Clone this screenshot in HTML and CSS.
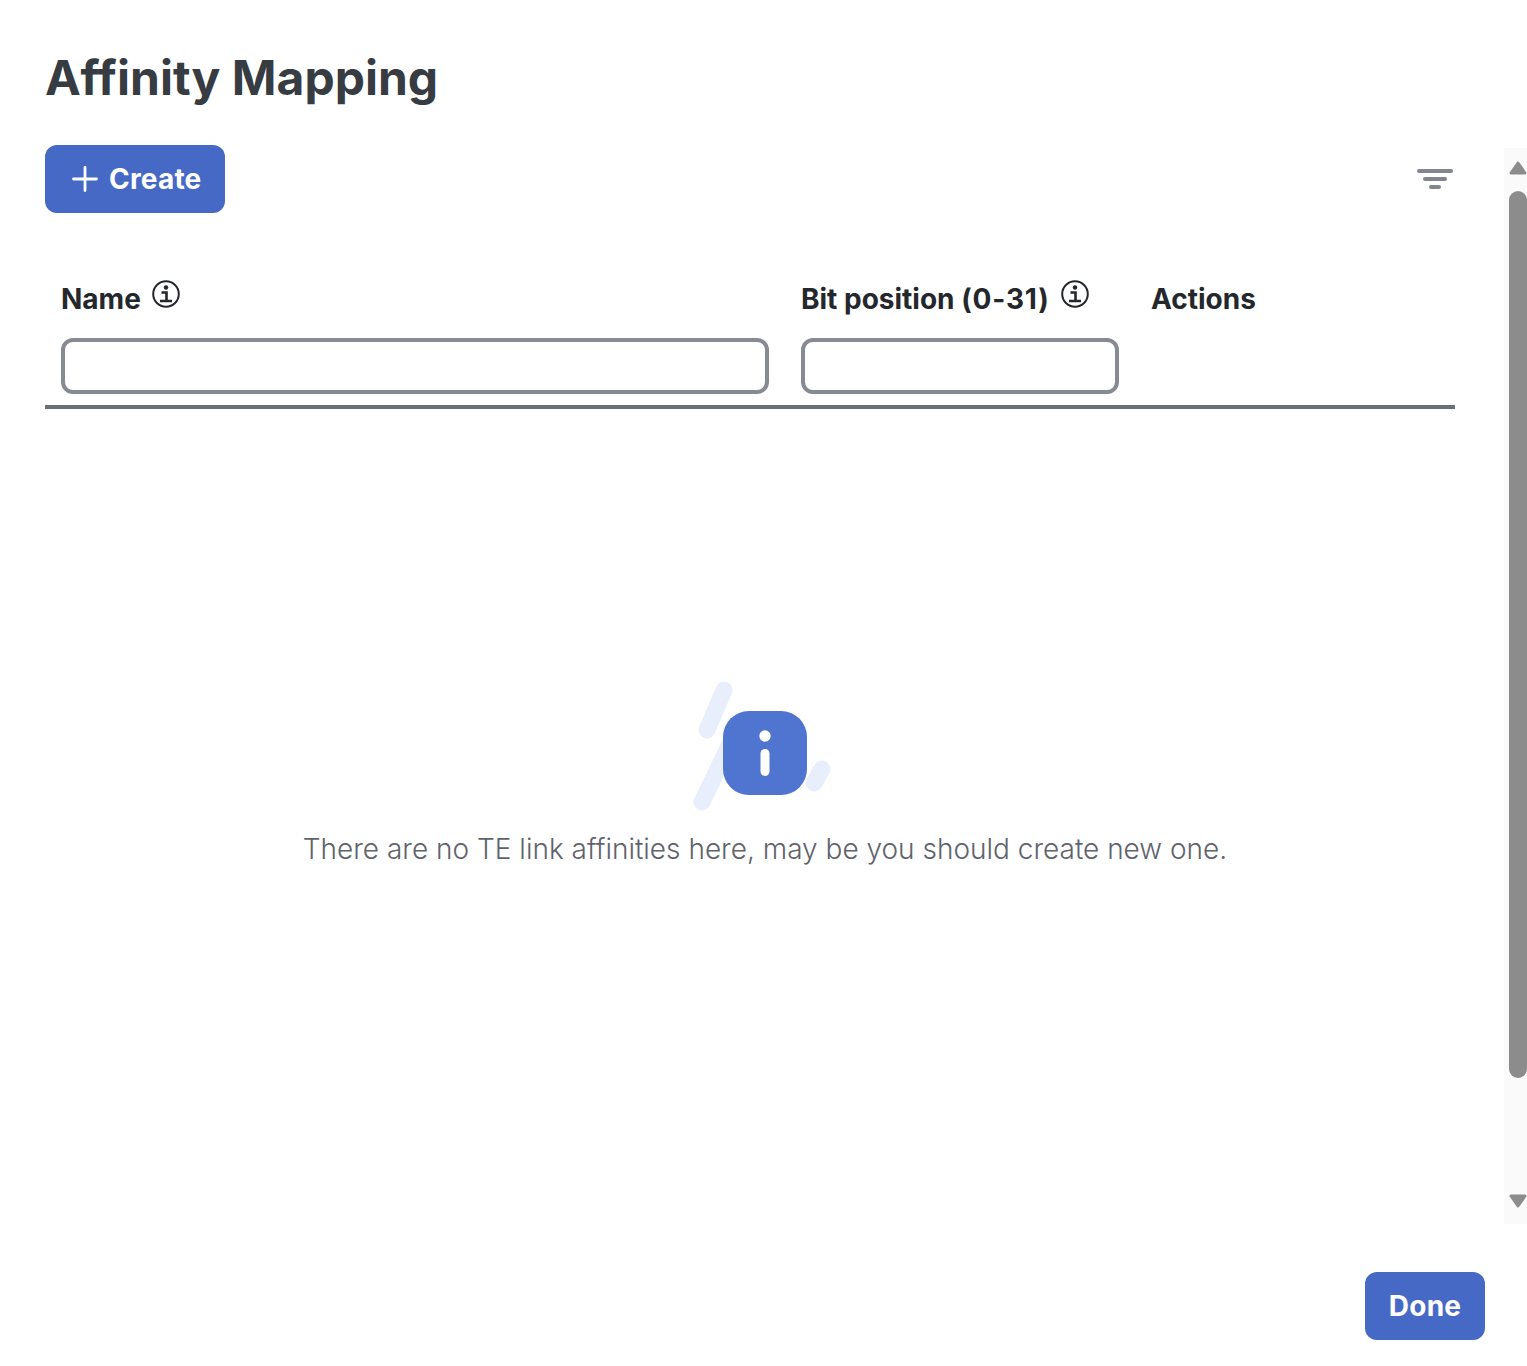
FILE: index.html
```html
<!DOCTYPE html>
<html lang="en">
<head>
    <meta charset="UTF-8">
    <title>Affinity Mapping</title>
    <link rel="stylesheet" href="styles.css">
</head>
<body>
    <div class="dialog">
        <h1 class="title">Affinity Mapping</h1>

        <div class="content">
            <div class="main">
                <div class="toolbar">
                    <button class="btn btn-create" type="button">
                        <svg class="plus-icon" viewBox="0 0 26 26" width="26" height="26">
                            <path d="M13 1.5v23M1.5 13h23" fill="none" stroke="#fff" stroke-width="2.8" stroke-linecap="round"/>
                        </svg>
                        Create
                    </button>
                    <svg class="filter-icon" viewBox="0 0 36 22" width="36" height="22">
                        <path d="M2 3h32M8 11h20M14 19h8" fill="none" stroke="#82868e" stroke-width="4" stroke-linecap="round"/>
                    </svg>
                </div>

                <div class="table-head">
                    <div class="cell">
                        <div class="label">
                            Name
                            <svg class="info-icon" viewBox="0 0 28 28" width="28" height="28">
                                <circle cx="14" cy="14" r="12.8" fill="none" stroke="#24272c" stroke-width="2"/>
                                <circle cx="14" cy="7.5" r="2.2" fill="#24272c"/>
                                <path d="M9.500 12.500h5v9M8 21h12" fill="none" stroke="#24272c" stroke-width="2.600"/>
                            </svg>
                        </div>
                        <input class="filter-input" type="text">
                    </div>
                    <div class="cell">
                        <div class="label">
                            <span>Bit position <span class="range">(0-31)</span></span>
                            <svg class="info-icon" viewBox="0 0 28 28" width="28" height="28">
                                <circle cx="14" cy="14" r="12.8" fill="none" stroke="#24272c" stroke-width="2"/>
                                <circle cx="14" cy="7.5" r="2.2" fill="#24272c"/>
                                <path d="M9.500 12.500h5v9M8 21h12" fill="none" stroke="#24272c" stroke-width="2.600"/>
                            </svg>
                        </div>
                        <input class="filter-input" type="text">
                    </div>
                    <div class="cell">
                        <div class="label">Actions</div>
                    </div>
                </div>

                <div class="empty">
                    <svg class="empty-icon" viewBox="0 0 144 132" width="144" height="132">
                        <path d="M35 9 18 49M41 63 13 121M133 88l-8 14" fill="none" stroke="#e8eefb" stroke-width="17" stroke-linecap="round"/>
                        <rect x="34" y="30" width="84" height="84" rx="26" fill="#4f75d1"/>
                        <circle cx="76" cy="55" r="5.700" fill="#fff"/>
                        <rect x="71.500" y="68" width="9" height="27" rx="4.500" fill="#fff"/>
                    </svg>
                    <p class="empty-text">There are no TE link affinities here, may be you should create new one.</p>
                </div>
            </div>

            <div class="scrollbar">
                <svg class="arrow arrow-up" viewBox="0 0 18 14" width="18" height="14">
                    <path d="M9 2 2 12h14z" fill="#8c8c8c" stroke="#8c8c8c" stroke-width="3" stroke-linejoin="round"/>
                </svg>
                <div class="thumb"></div>
                <svg class="arrow arrow-down" viewBox="0 0 18 14" width="18" height="14">
                    <path d="M2 2h14L9 12z" fill="#8c8c8c" stroke="#8c8c8c" stroke-width="3" stroke-linejoin="round"/>
                </svg>
            </div>
        </div>

        <div class="footer">
            <button class="btn btn-done" type="button">Done</button>
        </div>
    </div>
</body>
</html>
```

FILE: styles.css
```css
* {
    box-sizing: border-box;
}

body {
    margin: 0;
    background: #fff;
    font-family: Inter, "Liberation Sans", sans-serif;
    color: #24272c;
}

.dialog {
    height: 1366px;
    display: flex;
    flex-direction: column;
    overflow: hidden;
    padding-left: 45px;
}

.title {
    margin: 0;
    padding-top: 46px;
    height: 145px;
    font-size: 48px;
    line-height: 64px;
    font-weight: 670;
    color: #373b42;
}

.content {
    display: flex;
    height: 1079px;
}

.main {
    width: 1410px;
}

.toolbar {
    display: flex;
    justify-content: space-between;
    align-items: center;
    height: 68px;
}

.btn {
    border: none;
    background: #4769c6;
    color: #fff;
    font-family: inherit;
    font-size: 28px;
    font-weight: 700;
    letter-spacing: 0.2px;
    height: 68px;
    border-radius: 12px;
    cursor: pointer;
}

.btn-create {
    width: 180px;
    display: flex;
    align-items: center;
    gap: 11px;
    padding: 0 0 0 27px;
}

.filter-icon {
    margin-right: 2px;
}

.table-head {
    display: grid;
    grid-template-columns: 740px 350px 320px;
    height: 196px;
    border-bottom: 4px solid #6b7078;
}

.cell {
    padding: 64px 16px 0;
}

.label {
    display: flex;
    align-items: flex-start;
    gap: 11px;
    height: 61px;
    font-size: 28px;
    line-height: 44px;
    font-weight: 650;
}

.range {
    letter-spacing: 0.8px;
}

.info-icon {
    margin-top: 3px;
}

.filter-input {
    display: block;
    width: 100%;
    height: 56px;
    border: 4px solid #868b93;
    border-radius: 12px;
    background: #fff;
}

.empty {
    display: flex;
    flex-direction: column;
    align-items: center;
    padding: 272px 0 0 30px;
}

.empty-icon {
    margin-right: 8px;
}

.empty-text {
    margin: 14px 0 0;
    font-size: 28px;
    line-height: 44px;
    font-weight: 300;
    color: #5f646c;
    white-space: nowrap;
}

.scrollbar {
    width: 23px;
    height: 1076px;
    margin: 3px 0 0 49px;
    background: #fafafa;
    position: relative;
}

.thumb {
    position: absolute;
    top: 43px;
    left: 5px;
    width: 18px;
    height: 887px;
    border-radius: 9px;
    background: #8c8c8c;
}

.arrow {
    position: absolute;
    left: 5px;
}

.arrow-up {
    top: 13px;
}

.arrow-down {
    bottom: 16px;
}

.footer {
    display: flex;
    justify-content: flex-end;
    padding: 48px 42px 0 0;
}

.btn-done {
    width: 120px;
}
```
